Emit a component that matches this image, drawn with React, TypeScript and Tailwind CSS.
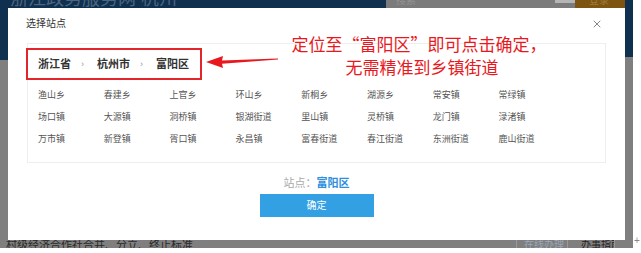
import { X } from 'lucide-react';

const towns = [
  '渔山乡', '春建乡', '上官乡', '环山乡', '新桐乡', '湖源乡', '常安镇', '常绿镇',
  '场口镇', '大源镇', '洞桥镇', '银湖街道', '里山镇', '灵桥镇', '龙门镇', '渌渚镇',
  '万市镇', '新登镇', '胥口镇', '永昌镇', '富春街道', '春江街道', '东洲街道', '鹿山街道',
];

const path = ['浙江省', '杭州市', '富阳区'];

export default function App() {
  return (
    <div className="relative w-[641px] h-[253px] bg-white font-['Liberation_Sans','Noto_Sans_CJK_SC',sans-serif] overflow-hidden">
      <div className="w-[633px] h-[248px] flex flex-col bg-[#7f7f7f]">
        {/* dimmed page header */}
        <div className="h-[8px] flex overflow-hidden">
          <div className="w-[386px] bg-[#10304f] overflow-hidden">
            <div className="ml-[10px] -mt-[11px] text-[18px] leading-[20px] text-[#4c6580] whitespace-nowrap">浙江政务服务网 杭州</div>
          </div>
          <div className="w-[189px] bg-[#7b7b7b] relative overflow-hidden">
            <div className="ml-[10px] -mt-[5px] text-[10px] leading-[12px] text-[#929292]">搜索</div>
            <div className="absolute right-0 top-0 w-[20px] h-[3px] bg-[#b5b5b5]" />
          </div>
          <div className="w-[50px] bg-[#7e5510] overflow-hidden">
            <div className="ml-[14px] -mt-[5px] text-[10px] leading-[12px] text-[#a07a3a]">登录</div>
          </div>
          <div className="w-[8px] bg-[#10304f]" />
        </div>

        <div className="h-[232px] flex">
          <div className="w-[8px] flex flex-col">
            <div className="h-[52px] bg-[#10304f]" />
            <div className="flex-1 bg-[#7f7f7f]" />
          </div>

          {/* modal */}
          <div className="relative w-[617px] bg-white flex flex-col">
            <div className="flex items-center justify-between pt-[10px] pl-[18px] pr-[22px] h-[22px]">
              <span className="text-[10px] leading-[12px] text-[#333]">选择站点</span>
              <X className="w-[12px] h-[12px] text-[#666]" strokeWidth={1.6} />
            </div>

            <div className="mt-[13px] mx-[19px] border border-[#eeeeee] pl-[10px] pb-[11px]">
              <div className="h-[41px] flex items-center gap-[10px] text-[11px] font-bold text-[#333]">
                {path.map((p, i) => (
                  <div key={p} className="flex items-center gap-[10px]">
                    <span className="w-[33px] whitespace-nowrap">{p}</span>
                    {i < path.length - 1 && (
                      <span className="w-[6px] text-[9px] font-normal text-[#999]">›</span>
                    )}
                  </div>
                ))}
              </div>
              <div className="grid grid-cols-[repeat(8,65.8px)]">
                {towns.map((t) => (
                  <div key={t} className="h-[22px] flex items-center text-[9px] text-[#555] whitespace-nowrap">
                    {t}
                  </div>
                ))}
              </div>
            </div>

            <div className="mt-[12px] h-[16px] flex items-center justify-center text-[11px]">
              <span className="text-[#aaa]">站点：</span>
              <span className="font-bold text-[#2f8fdc]">富阳区</span>
            </div>
            <div className="mt-[3px] flex justify-center">
              <button className="w-[114px] h-[23px] bg-[#33a0e4] text-white text-[10px]">确定</button>
            </div>

            {/* annotation: red box, arrow, note */}
            <div className="absolute left-[18px] top-[40px] w-[176px] h-[32px] border-2 border-[#e3242b]" />
            <svg className="absolute left-[198px] top-[47px]" width="74" height="14" viewBox="0 0 74 14">
              <polygon points="0,7 17,1 16,5.5 72,3.5 72,4.6 16,8.8 17,13" fill="#e8191e" />
            </svg>
            <div className="absolute left-[282px] top-[24px] w-[258px] text-center text-[17px] leading-[23px] text-[#e8191e] font-['Noto_Sans_CJK_SC',sans-serif]">
              <div className="whitespace-nowrap">定位至“富阳区”即可点击确定，</div>
              <div className="whitespace-nowrap pl-[6px]">无需精准到乡镇街道</div>
            </div>
          </div>

          <div className="w-[8px] flex flex-col">
            <div className="h-[49px] bg-[#10304f]" />
            <div className="flex-1 bg-[#7f7f7f]" />
          </div>
        </div>

        {/* dimmed page footer */}
        <div className="h-[8px] flex overflow-hidden bg-[#7f7f7f]">
          <div className="w-[516px] overflow-hidden">
            <div className="ml-[6px] -mt-[1px] text-[11px] leading-[13px] text-[#2a2a2a] whitespace-nowrap">村级经济合作社合并、分立、终止标准</div>
          </div>
          <div className="w-[1px] bg-[#999]" />
          <div className="w-[50px] overflow-hidden">
            <div className="ml-[7px] -mt-[1px] text-[10px] leading-[12px] text-[#9aa8b8] whitespace-nowrap">在线办理</div>
          </div>
          <div className="w-[1px] bg-[#999]" />
          <div className="w-[46px] overflow-hidden">
            <div className="ml-[13px] -mt-[1px] text-[10px] leading-[12px] text-[#222] whitespace-nowrap">办事指南</div>
          </div>
          <div className="w-[1px] bg-[#999]" />
        </div>
      </div>
      <span className="absolute left-[634px] top-[236px] text-[10px] leading-[10px] text-[#888]">+</span>
    </div>
  );
}
